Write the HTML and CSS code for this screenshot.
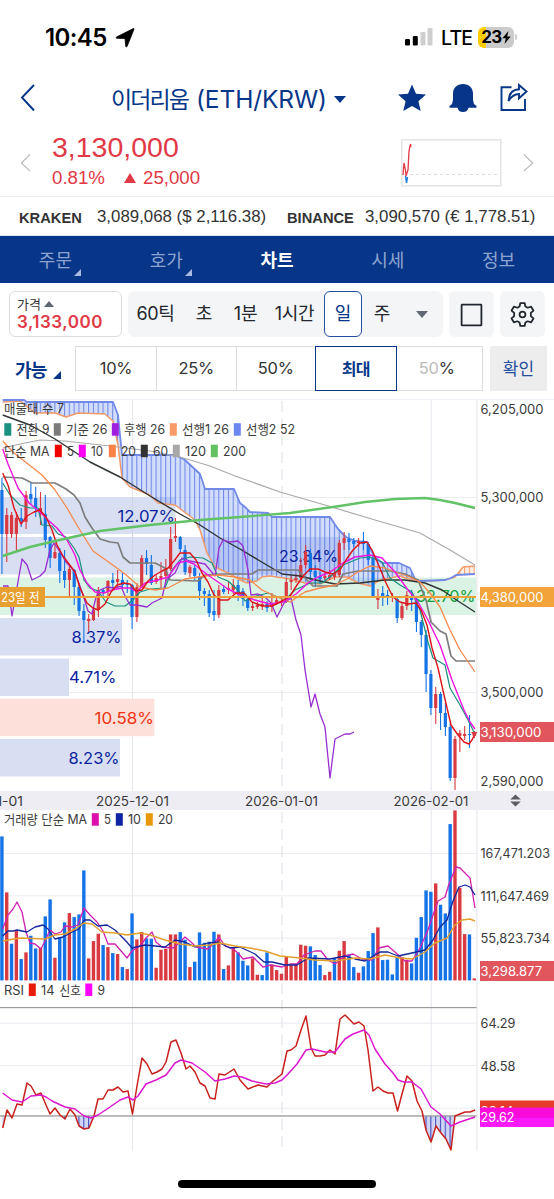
FILE: index.html
```html
<!DOCTYPE html>
<html lang="ko">
<head>
<meta charset="utf-8">
<title>이더리움 (ETH/KRW)</title>
<link rel="stylesheet" href="styles.css">
</head>
<body>
<div class="app">
  <div class="status">
    <span class="clock">10:45</span>
    <svg class="loc" viewBox="0 0 20 20"><path d="M19 1.2 L12 18.6 Q11.300 19.6 10.8 18.4 L10 10.4 L1.9 10.3 Q0.3 9.8 1.6 8.9 L18 .7 Q19.3 .3 19 1.2Z"/></svg>
    <svg class="signal" viewBox="0 0 29 18"><rect x="0" y="11" width="5" height="6.5" rx="1.3"/><rect x="7.8" y="8" width="5" height="9.500" rx="1.3"/><g fill="#cfcfcf"><rect x="15.500" y="4" width="5" height="13.5" rx="1.3"/><rect x="22.500" y="0" width="5" height="17.5" rx="1.3"/></g></svg>
    <span class="lte">LTE</span>
    <span class="battery"><span>23</span><svg viewBox="0 0 9 13"><path d="M6.500 0 L.3 7.200 H3.800 L2.500 13 L8.700 5.400 H5.200Z"/></svg></span>
    <span class="battery-cap"></span>
  </div>

  <div class="header">
    <svg class="back" viewBox="0 0 16 28"><path d="M14 1 L2 13.500 L14 26.500"/></svg>
    <div class="title"><span class="name">이더리움</span><span>(ETH/KRW)</span><i></i></div>
    <svg class="star" viewBox="0 0 30 30"><path d="M15 1.500 L19 10.700 L29 11.600 L21.400 18.200 L23.700 28 L15 23 L6.300 28 L8.600 18.200 L1 11.600 L11 10.700Z"/></svg>
    <svg class="bell" viewBox="0 0 30 30"><path d="M15 1 C9 1 5 5 5 10.500 V17 L4 21 L1.500 23 V24.700 H9.500 C10 27.500 12 29 15 29 C18 29 20 27.500 20.500 24.700 H28.500 V23 L26 21 L25 17 V10.500 C25 5 21 1 15 1Z"/></svg>
    <svg class="share" viewBox="0 0 30 30"><path d="M12.500 4.300 H2.500 V27 H26 V16"/><path d="M9.500 18 C10 10 13.500 6.500 20 6.300 V2 L27.500 8.500 L20 15.300 V11 C15.500 11 12.500 13 9.500 18Z"/></svg>
  </div>

  <div class="quote">
    <svg class="arrow" viewBox="0 0 12 22"><path d="M11 1.500 L1.500 11 L11 20"/></svg>
    <div class="figures">
      <div class="price">3,130,000</div>
      <div class="change"><span>0.81%</span><i></i><span>25,000</span></div>
    </div>
    <svg class="spark" viewBox="0 0 101 48"><rect x=".8" y=".8" width="99" height="46"/><path class="dash" d="M9 35.500 H97"/><path class="up" d="M2 36 L3 24 L4.500 31 L5 37 L7 31 L8 12 L9.500 5 L10 8"/><path class="down" d="M4.500 37 L5.500 44 L6.500 38"/></svg>
    <svg class="arrow" viewBox="0 0 12 22"><path d="M1 1.500 L10.500 11 L1 20"/></svg>
  </div>

  <div class="rates">
    <b>KRAKEN</b><span>3,089,068 ($ 2,116.38)</span>
    <b>BINANCE</b><span>3,090,570 (€ 1,778.51)</span>
  </div>

  <div class="tabs">
    <div class="tab more">주문</div><div class="tab more">호가</div><div class="tab on">차트</div><div class="tab">시세</div><div class="tab">정보</div>
  </div>

  <div class="tools">
    <div class="pricebox"><div class="label">가격<i></i></div><b>3,133,000</b></div>
    <div class="periods"><span>60틱</span><span>초</span><span>1분</span><span>1시간</span><span class="sel">일</span><span>주</span><i></i></div>
    <div class="tool"><svg viewBox="0 0 24 24"><rect x="2.500" y="2.500" width="19" height="20" rx=".5"/></svg></div>
    <div class="tool"><svg viewBox="0 0 24 24"><path d="M9.900 1 H14.100 L14.800 4.300 L17 5.500 L20.300 4.500 L22.500 8.200 L20 10.500 V13.500 L22.500 15.800 L20.300 19.500 L17 18.500 L14.800 19.700 L14.100 23 H9.900 L9.200 19.700 L7 18.500 L3.700 19.500 L1.500 15.800 L4 13.500 V10.500 L1.500 8.200 L3.700 4.500 L7 5.500 L9.200 4.300Z"/><circle cx="12" cy="12" r="2.800"/></svg></div>
  </div>

  <div class="ratio">
    <div class="avail">가능<i></i></div>
    <div class="cells"><span>10%</span><span>25%</span><span>50%</span><span class="sel">최대</span><span><em>50</em>%</span></div>
    <div class="confirm">확인</div>
  </div>

  <svg id="price" class="panel" viewBox="0 399 554 392" height="392"></svg>
  <div class="dates">
    <svg viewBox="0 791 554 19" height="19" id="dates"></svg>
  </div>
  <svg id="volume" class="panel" viewBox="0 810 554 171" height="171"></svg>
  <svg id="rsi" class="panel" viewBox="0 981 554 171" height="171"></svg>
  <div class="home"></div>
</div>
<script src="chart.js"></script>
</body>
</html>
```
FILE: styles.css
```css
* { box-sizing: border-box; }
body { margin: 0; background: #fff; font-family: "Liberation Sans", "Noto Sans CJK KR", sans-serif; }
i, em { font-style: normal; }
svg { display: block; flex: none; }
.app { width: 554px; height: 1199px; display: flex; flex-direction: column; overflow: hidden; white-space: nowrap; }
.app > * { flex: none; }

.status { height: 74px; display: flex; align-items: center; padding-left: 45px; font-family: Inter, sans-serif; color: #000; }
.clock { width: 64px; margin-top: 2px; font-size: 24px; font-weight: 600; letter-spacing: -.6px; line-height: 24px; }
.loc { width: 20px; height: 20px; margin-left: 6px; margin-top: 1px; stroke: #000; stroke-width: .8; overflow: visible; }
.signal { width: 29px; height: 18px; margin-left: 270px; }
.lte { width: 37px; margin-left: 7px; margin-top: 2px; font-size: 19.500px; font-weight: 500; letter-spacing: -.8px; }
.battery { width: 36px; height: 21px; margin-top: 0; border-radius: 6px; background: linear-gradient(90deg, #fc0 8px, #cbcbcb 8px); display: flex; align-items: center; justify-content: center; font-size: 17px; font-weight: 700; letter-spacing: -.6px; }
.battery svg { width: 9px; height: 13px; }
.battery-cap { width: 2px; height: 6px; margin: 0 0 0 1px; border-radius: 0 2px 2px 0; background: #ccc; }

.header { height: 50px; display: flex; align-items: center; padding-left: 20px; color: #073688; }
.header svg { fill: #073688; }
.header .back, .header .share { fill: none; stroke: #073688; stroke-width: 1.900; }
.back { width: 16px; height: 28px; margin-top: -2px; }
.title { width: 286px; margin-left: 75px; display: flex; align-items: center; font: 400 24.500px/48px Inter, sans-serif; letter-spacing: -.1px; }
.title .name { width: 85px; margin-top: -3px; font: 400 23px/48px "Noto Sans CJK KR", sans-serif; letter-spacing: -1.900px; }
.title i { margin-left: 7px; border: 6px solid transparent; border-top: 7px solid #073688; border-bottom: 0; }
.star, .bell, .share { width: 30px; height: 30px; margin-top: -2px; }
.bell { margin-left: 21px; }
.share { margin-left: 21px; }

.quote { height: 73px; display: flex; padding-left: 20px; color: #e13945; border-bottom: 1px solid #ececec; }
.arrow { width: 11px; height: 20px; margin-top: 29px; fill: none; stroke: #b9b9b9; stroke-width: 1.300; }
.figures { width: 349px; padding-left: 21px; }
.price { font-size: 28.500px; line-height: 32px; margin-top: 7px; }
.change { display: flex; align-items: center; font-size: 18.700px; line-height: 24px; margin-top: 3px; }
.change i { margin: 0 7px 0 19px; border: 6.500px solid transparent; border-bottom: 10px solid #e13945; border-top: 0; }
.spark { width: 101px; height: 48px; margin: 15px 21px 0; fill: none; }
.spark rect { stroke: #e4e4e4; stroke-width: 1.500; }
.dash { stroke: #ddd; stroke-dasharray: 3 3; }
.up { stroke: #e13945; stroke-width: 1.300; }
.down { stroke: #2581da; stroke-width: 1.500; }

.rates { height: 39px; padding: 2px 0 0 19px; display: grid; grid-template-columns: 78px 190px 78px 180px; align-items: center; border-bottom: 1px solid #dce5f3; font-size: 16.850px; color: #333; }
.rates b { font-size: 14.700px; padding-top: 1px; }

.tabs { height: 47px; background: #073688; display: grid; grid-template-columns: repeat(5, 1fr); }
.tab { position: relative; text-align: center; color: #8da4d1; font: 400 18px/46px "Noto Sans CJK KR", sans-serif; }
.tab.on { color: #fff; font-weight: 700; }
.more::after { content: ""; position: absolute; left: 74px; top: 33px; border-left: 7px solid transparent; border-bottom: 7px solid #a9bbe0; }

.tools { height: 62px; padding: 8px 9px; display: flex; gap: 6px; }
.pricebox { width: 113px; height: 46px; border: 1.500px solid #dcdddf; border-radius: 6px; padding-left: 7px; color: #e13945; }
.pricebox .label { display: flex; align-items: center; gap: 3px; height: 14px; margin-top: 5px; font: 400 13px/14px "Noto Sans CJK KR", sans-serif; color: #333; }
.pricebox i { border: 5.500px solid transparent; border-bottom: 6px solid #5f6570; border-top: 0; }
.pricebox b { display: block; margin-top: 1px; font: 600 17px/20px Inter, sans-serif; letter-spacing: .5px; }
.periods { width: 315px; height: 46px; display: grid; grid-template-columns: 55px 42px 41px 57px 39px 40px 1fr; align-items: center; background: #f3f5f6; border-radius: 7px; text-align: center; font: 400 18px/46px Inter, "Noto Sans CJK KR", sans-serif; color: #24272e; letter-spacing: -.3px; }
.periods .sel { height: 46px; line-height: 43px; border: 1.500px solid #244f9f; border-radius: 6px; background: #fff; color: #073688; margin-left: 1px; }
.periods i { justify-self: center; margin-left: -1px; border: 6px solid transparent; border-top: 7px solid #606873; border-bottom: 0; }
.tool { width: 45px; height: 46px; display: grid; place-items: center; background: #f3f5f6; border-radius: 6px; }
.tool svg { width: 25px; height: 25px; fill: none; stroke: #22262e; stroke-width: 1.700; stroke-linejoin: round; }

.ratio { height: 54px; padding: 1px 0 0 15px; display: flex; }
.avail { width: 60px; height: 45px; display: flex; font: 700 18px/46px "Noto Sans CJK KR", sans-serif; letter-spacing: -.8px; color: #073688; }
.avail i { margin: 25px 0 0 6px; height: 8px; border-left: 8px solid transparent; border-bottom: 8px solid #073688; }
.cells { width: 408px; height: 45px; display: grid; grid-template-columns: 80px 79.500px 79.500px 81.500px 1fr; border: 1.500px solid #ddd; font: 400 16.500px/42px Inter, sans-serif; text-align: center; color: #333; letter-spacing: -.2px; }
.cells span + span { border-left: 1.500px solid #ddd; }
.cells span.sel { margin: -1px 0; border: 1.500px solid #073688; font: 700 16px/42px "Noto Sans CJK KR", sans-serif; letter-spacing: -.7px; color: #073688; }
.cells .sel + span { border-left: 0; }
.cells span:last-child { padding-right: 5px; }
.cells em { color: #bbb; }
.confirm { width: 57px; height: 45px; margin-left: 7px; background: #ededed; color: #244f9f; text-align: center; font: 400 17px/43px "Noto Sans CJK KR", sans-serif; }

.panel, .dates svg { width: 554px; }
.dates { height: 19px; background: #ededf3; }
.home { width: 198px; height: 8px; margin: 28px 0 0 178px; border-radius: 4px; background: #000; }
svg text { font-family: Inter, "Noto Sans CJK KR", sans-serif; font-size: 13px; fill: #3b3b3b; }
svg text.pct { font-size: 16.500px; }
```
FILE: chart.js
```js
const NS = 'http://www.w3.org/2000/svg';
const STEP = 4.82, X0 = 1.9;
const BLUE = '#1473e6', RED = '#d93a42';
const xOf = i => X0 + STEP * i;

function add(parent, tag, attrs, text) {
  const el = document.createElementNS(NS, tag);
  for (const k in attrs) el.setAttribute(k, attrs[k]);
  if (text !== undefined) el.textContent = text;
  parent.appendChild(el);
  return el;
}
const rect = (p, x, y, w, h, fill) => add(p, 'rect', { x, y, width: w, height: h, fill });
const line = (p, pts, stroke, w = 1.2) => add(p, 'polyline', { points: pts, fill: 'none', stroke, 'stroke-width': w, 'stroke-linejoin': 'round' });
// Label that spans x1..x2, centred vertically on cy
function label(p, s, x1, x2, cy, fill, cls) {
  const a = { x: x1, y: cy + (cls ? 5.7 : 4.7), textLength: x2 - x1, lengthAdjust: 'spacingAndGlyphs' };
  const t = add(p, 'text', a, s);
  if (fill) t.style.fill = fill;
  if (cls) t.setAttribute('class', cls);
}
function grid(p, top, bottom, rows) {
  rows.forEach(y => rect(p, 0, y, 476, 1, '#ececf2'));
  [132, 430.7].forEach(x => rect(p, x, top, 1, bottom - top, '#e6e6ee'));
  add(p, 'path', { d: `M282 ${top + 2}V${bottom}`, stroke: '#dedee6', 'stroke-dasharray': '11 6', fill: 'none' });
  rect(p, 476.3, top, 1.2, bottom - top, '#e8e8ee');
}
function legend(p, items, cy) {
  items.forEach(([color, s, x1, x2]) => {
    if (color) rect(p, x1 - 12.2, cy - 6.3, 7, 12.5, color);
    label(p, s, x1, x2, cy);
  });
}
function hatch(p, id, fill, stroke) {
  const pat = add(add(p, 'defs', {}), 'pattern', { id, x: X0 - .6, y: 0, width: STEP, height: 10, patternUnits: 'userSpaceOnUse' });
  rect(pat, 0, 0, STEP, 10, fill);
  rect(pat, 0, 0, 1.1, 10, stroke);
}
const reversed = s => s.split(' ').reverse().join(' ');

/* ---- price ---- */
const price = document.getElementById('price');
rect(price, 0, 398.500, 554, 1, '#e3e3f0');
grid(price, 399, 791, [497, 597, 692]);
[[497, 37, 175.5, '#d9dff2'], [537, 37.5, 340, '#d9dff2'], [577.5, 37.5, 476, '#dbf3e4'], [618, 37.5, 122, '#d9dff2'],
 [658.5, 37.5, 69, '#d9dff2'], [698.7, 37.5, 154.3, '#fee0da'], [739, 37.5, 120, '#d9dff2']]
  .forEach(([y, h, w, f]) => rect(price, 0, y, w, h, f));
rect(price, 132, 497, 1, 118, '#d0d5e6');
rect(price, 430.7, 577, 1, 38, '#cfe3da');

const spanB = '2.7,400 24,400 27,402 113,402 118,415 122,455 175,455 185,460 200,474 205,489 234,489 240,503 245,507 250,512 268,513 272,517 330,517 338,529 346,537 355,541 367,542 374,556 382,563 399,563 410,568 415,579 420,581 445,580';
const spanBEnd = '445,580 451,578 456,575 475,574';
const spanA = '2.7,402 20,401 35,413 55,413 66,417 78,413 105,414 113,421 118,445 122,478 130,487 150,495 158,503 175,505 195,520 200,530 207,553 215,567 228,573 240,580 247,583 257,581 262,577 270,576 290,579 305,583 320,584 335,577 347,577 358,583 370,586 380,580 400,576 405,578 412,580 430,581 445,580';
const spanAEnd = '445,580 455,577 463,567 475,566';
hatch(price, 'cloudBlue', 'rgba(110,145,245,.3)', 'rgba(80,110,225,.75)');
hatch(price, 'cloudOrange', 'rgba(255,170,120,.2)', '#f4a46f');
add(price, 'polygon', { points: spanB + ' ' + reversed(spanA), fill: 'url(#cloudBlue)' });
add(price, 'polygon', { points: spanAEnd + ' ' + reversed(spanBEnd), fill: 'url(#cloudOrange)' });
line(price, spanA + ' ' + spanAEnd, '#f29a6a', 1.5);
line(price, spanB + ' ' + spanBEnd, '#7189e8', 1.8);

label(price, '12.07%', 117.5, 175, 516, '#0b1fa0', 'pct');
label(price, '23.34%', 279, 338, 556.5, '#0b1fa0', 'pct');
label(price, '32.70%', 416, 475.5, 596.5, '#12a23c', 'pct');
label(price, '8.37%', 71.5, 121.5, 637.5, '#0b1fa0', 'pct');
label(price, '4.71%', 69, 116.5, 677.5, '#0b1fa0', 'pct');
label(price, '10.58%', 94.5, 154, 718, '#ee3312', 'pct');
label(price, '8.23%', 68.5, 119.5, 758.5, '#0b1fa0', 'pct');

// direction, high, body top, body bottom, low
const candles = `b478,490,534,574 r508,515,534,562 r512,515,534,538 r512,518,534,552 b508,518,521,527 r491,495,522,529 b482,494,499,505 b487,498,508,517 r492,508,513,525 b495,514,540,548
b536,537,558,568 r543,552,558,559 b548,553,571,583 b550,571,580,588 r566,569,580,596 b569,570,587,605 b583,587,611,616 b604,611,620,643 r614,619,621,632 r608,610,620,621
r587,590,610,617 b588,590,593,597 r580,581,591,598 b573,580,583,590 r570,579,582,588 b573,580,585,590 b580,583,585,593 b584,585,617,629 r583,587,617,622 r555,558,587,588
b550,558,564,575 b555,565,583,585 r575,578,582,584 r562,576,579,588 r559,569,576,583 r527,539,569,571 r518,536,538,542 b536,537,549,552 b545,550,572,575 r565,567,573,577
b565,568,576,580 b573,576,591,600 b588,591,594,606 b590,594,613,617 b590,611,615,621 r585,590,615,618 b585,589,592,594 r582,588,590,594 r579,585,590,594 b580,585,592,601
b588,591,599,606 b598,599,608,611 r603,606,608,611 r602,605,607,609 r598,604,606,610 b601,604,608,612 r593,603,607,612 r597,600,603,605 r598,601,603,606 r578,582,602,603
r576,580,582,590 r574,578,580,583 r558,565,578,580 r545,552,565,568 b549,553,572,580 b565,571,577,587 b572,576,579,584 r573,576,578,580 r570,575,578,580 r569,573,577,580
r540,543,575,577 r532,538,543,550 b533,539,542,550 b538,541,544,547 r538,541,543,547 b532,541,544,550 b542,544,560,565 b555,558,597,598 r589,597,600,609 b586,593,597,606
b590,595,597,605 r593,597,598,602 b598,599,618,623 r603,606,618,620 r591,595,606,610 b590,597,600,611 b598,599,622,632 b620,622,635,647 b630,635,674,692 b670,674,708,715
r687,694,708,724 b692,694,713,730 b703,713,727,736 b723,727,778,781 r736,739,778,790 r730,733,736,752 r726,734,736,740 b715,734,735,748 r731,732,736,738`.split(/\s+/);
candles.forEach((c, i) => {
  const color = c[0] === 'b' ? BLUE : RED;
  const [hi, t, b, lo] = c.slice(1).split(',').map(Number);
  const x = xOf(i);
  rect(price, x - .5, hi, 1.1, lo - hi, color);
  rect(price, x - 1.6, t, 3.2, b - t, color);
});

line(price, '2.7,448 25,443 40,440 65,441 110,446 150,451 180,457 210,466 235,476 280,492 325,505 375,520 420,533 450,550 475,565', '#aaa');
line(price, '2.7,415 30,425 55,439 90,462 120,477 150,496 180,514 200,525 220,538 240,549 260,561 282,574 300,576 320,581 335,584 360,583 385,580 405,580 425,583 442,590 458,601 475,612', '#2f3434', 1.4);
line(price, '2.7,477 22,478 32,483 55,483 66,489 74,495 80,503 85,517 92,528 100,539 110,542 118,543 123,557 130,563 155,563 165,568 170,580 198,581 205,575 220,574 252,574 258,570 298,570 305,578 313,586 337,586 343,574 358,571 390,571 405,574 418,580 426,600 431,622 440,631 446,634 451,656 456,661 475,661', '#7d7d7d', 1.7);
line(price, '2.7,483 10,495 20,505 30,508 38,508 42,525 52,526 58,534 66,537 74,548 79,557 84,580 90,588 98,591 106,602 115,606 125,606 133,600 140,592 150,589 165,588 172,570 180,560 190,557 203,558 212,563 218,577 228,581 238,590 245,601 252,597 268,593 285,600 295,590 310,583 322,583 330,577 343,565 360,558 370,557 382,562 390,578 400,585 412,592 420,610 428,642 433,658 445,665 450,688 460,705 468,720 475,734', '#18917f');
line(price, '3,586 8,586 12,616 22,559 27,565 32,580 40,576 45,571 50,550 54,543 60,552 66,562 75,572 82,592 88,611 92,614 96,597 100,590 107,587 114,588 121,586 125,596 130,605 137,605 147,607 152,603 162,598 166,580 175,573 182,558 190,561 205,564 215,576 219,548 223,540 230,542 238,541 243,546 248,570 251,595 258,594 265,597 271,603 277,617 284,603 291,598 296,620 301,635 305,670 311,707 315,694 320,714 325,727 330,778 335,739 341,736 345,734 350,734 354,732', '#982fd0', 1.3);
line(price, '2.7,441 14,453 28,464 42,475 55,490 67,508 78,527 93,551 110,563 125,574 140,587 155,590 168,588 185,579 205,576 218,575 235,577 250,580 262,590 275,596 290,602 305,592 320,588 335,585 347,579 358,572 370,566 385,568 398,573 410,577 420,582 430,593 440,607 450,630 460,650 475,672', '#f7894c', 1.3);
line(price, '2.7,449 8,464 18,488 29,503 40,512 48,520 57,528 67,540 75,555 80,570 87,583 95,592 104,593 112,590 122,588 130,588 137,592 145,583 158,580 168,577 178,563 186,561 194,564 200,569 208,575 218,582 228,589 240,595 255,600 270,604 283,602 296,594 308,583 318,577 330,572 343,563 355,557 370,555 382,558 395,572 408,590 418,602 428,620 440,645 452,680 464,710 470,722 475,729', '#f013df', 1.4);
line(price, '2.7,473 8,485 14,508 21,524 27,516 34,512 40,510 46,517 52,530 57,545 63,556 69,564 75,572 80,588 87,603 93,608 98,610 105,604 111,592 117,585 124,583 130,584 136,591 142,590 148,581 155,575 162,571 168,568 174,561 180,553 190,553 196,560 202,573 208,582 214,595 220,600 228,600 236,593 244,593 252,602 262,606 272,606 282,601 290,596 297,585 304,575 310,569 318,569 325,572 333,574 340,570 346,560 353,550 360,543 367,542 372,550 379,566 386,583 393,597 400,602 408,604 416,603 421,610 427,625 432,648 438,668 444,695 451,725 458,735 464,742 469,744 472,740 475,734', '#dd1218', 1.4);
line(price, '2.7,556 30,547 55,541 100,531 150,525 200,520 240,517 290,513 340,506 365,502 395,499 425,498 440,500 455,503 475,508', '#61c267', 2.4);
add(price, 'polygon', { points: '471,732 477.500,732 474.500,737', fill: RED });

rect(price, 45, 596, 431, 2, '#eca13a');
rect(price, 0, 587, 45, 20, '#e7a030');
label(price, '23일 전', 1, 39.5, 597, '#fff');
label(price, '매물대 수 7', 4, 64, 408);
legend(price, [['#18917f', '전환 9', 16.5, 49.5], ['#7a7a7a', '기준 26', 66, 107.5], ['#a020e0', '후행 26', 124, 165], ['#fa9a68', '선행1 26', 182, 229], ['#6d87f0', '선행2 52', 246, 295]], 429.5);
legend(price, [[null, '단순 MA', 4, 49.5], ['#f20000', '5', 67, 74], ['#fb00f5', '10', 91, 103], ['#fb8246', '20', 121, 136], ['#333', '60', 153, 168], ['#a8a8a8', '120', 185, 206], ['#62c262', '200', 223, 246]], 451);

label(price, '6,205,000', 480.5, 543.5, 409.5);
label(price, '5,300,000', 480.5, 543.5, 497.5);
label(price, '3,500,000', 480.5, 543.5, 692.5);
label(price, '2,590,000', 480.5, 543.5, 781);
rect(price, 480, 587, 74, 20, '#f2a33a');
label(price, '4,380,000', 480.5, 543.5, 597, '#fff');
rect(price, 480, 722, 74, 20, '#e0565c');
label(price, '3,130,000', 480.5, 541.5, 732.5, '#fff');

const dates = document.getElementById('dates');
label(dates, '2025-11-01', -50, 23, 801);
label(dates, '2025-12-01', 96, 169, 801);
label(dates, '2026-01-01', 245, 318, 801);
label(dates, '2026-02-01', 393.5, 468.5, 801);
add(dates, 'path', { d: 'M515.500 794.500 L520.800 799.500 H510.200Z M510.200 801.500 H520.800 L515.500 806.500Z', fill: '#5c5c64' });

/* ---- volume ---- */
const vol = document.getElementById('volume');
grid(vol, 810, 981, [853, 895.3, 937.7]);
// direction and bar height in thirds of a pixel
const bars = `b432 r264 b110 r148 b64 r84 b134 b96 r98 b192 b243 r68 b130 b174 r202 b190 b198 b330 r66 r118 r140 b106 r100 b82 r79 b40 r34 b201 r123 r145
b126 b125 r38 r92 r95 r138 r138 b145 b122 r40 b56 b144 b113 b116 b146 r138 b34 r45 r98 b84 b59 b45 r66 r17 b16 b84 r48 r31 r20 r72
r46 r48 r107 r104 b102 b76 b46 r16 r26 b66 r89 r118 b78 b40 r23 b42 b88 b142 r159 b61 b62 b18 b71 r70 r62 b51 b128 b190 b270 b266
r291 b227 b201 b469 r510 r278 r139 b138 r6`.split(/\s+/);
bars.forEach((s, i) => {
  const h = s.slice(1) / 3;
  rect(vol, xOf(i) - 1.7, 980.4 - h, 3.4, h, s[0] === 'b' ? BLUE : RED);
});
line(vol, '2.7,929 8,915 13,909 17,902 22,912 26,932 30,943 35,944 41,949 45,941 50,930 55,934 61,932 65,926 72,927 78,925 84,908 90,915 97,922 103,931 108,944 115,944 122,952 127,958 132,951 140,946 146,938 152,932 156,942 162,947 173,948 178,944 185,937 191,942 196,947 208,949 215,942 219,937 225,946 232,948 238,953 243,959 253,957 263,967 270,965 282,967 290,964 297,964 304,955 315,951 321,951 328,960 335,964 345,956 353,954 362,959 372,960 379,948 388,946 395,952 405,961 412,961 420,948 428,930 433,915 438,901 445,897 449,884 456,867 460,868 465,873 470,878 475,908', '#cf22b3', 1.3);
line(vol, '2.7,936 8,931 13,931 17,930 27,932 35,927 43,925 48,929 55,939 63,937 72,932 79,929 84,920 90,920 98,926 107,925 115,930 125,940 132,948 145,945 165,947 175,940 185,942 195,947 208,943 218,942 230,948 240,947 255,954 264,962 272,962 285,965 297,965 308,958 330,959 345,956 355,959 365,961 380,952 388,952 398,956 412,953 425,950 433,940 440,927 447,920 453,901 459,887 465,885 470,887 475,895', '#15269b', 1.3);
line(vol, '2.7,941 20,938 45,939 55,935 65,934 75,929 84,923 92,924 102,932 115,933 127,935 140,933 150,935 165,940 180,944 195,946 210,945 220,943 235,946 250,948 265,951 280,956 300,958 315,960 335,961 355,958 370,959 385,955 400,958 412,959 425,952 435,943 447,938 455,925 462,920 470,919 475,921', '#e2a02d', 1.4);
legend(vol, [[null, '거래량 단순 MA', 4, 87], ['#dc10aa', '5', 104, 111], ['#1023a5', '10', 128, 141], ['#e9980c', '20', 158, 173]], 819.5);
label(vol, '167,471.203', 480.5, 550, 853.5);
label(vol, '111,647.469', 480.5, 549, 896);
label(vol, '55,823.734', 480.5, 550, 938.5);
rect(vol, 480, 961, 74, 20, '#e0565c');
label(vol, '3,298.877', 480.5, 542, 971, '#fff');

/* ---- RSI ---- */
const rsi = document.getElementById('rsi');
grid(rsi, 981, 1151, [1022.7, 1065, 1107.7]);
const rsiLine = '2.7,1128 7,1110 12,1118 17,1104 22,1105 27,1083 31,1086 36,1095 41,1093 46,1105 50,1114 55,1108 60,1115 65,1119 70,1109 75,1115 79,1126 84,1129 89,1128 94,1116 98,1099 103,1099 108,1090 113,1090 118,1087 123,1092 128,1091 132.5,1114 137,1086 142,1058 147,1064 152,1074 157,1072 162,1069 166,1062 171,1042 176,1040 181,1053 186,1069 190,1066 195,1072 200,1083 205,1086 210,1098 215,1099 219,1074 225,1075 234,1069 240,1080 248,1089 258,1085 267,1087 273,1081 277,1078 282,1074 287,1051 291,1050 296,1046 301,1030 306,1016 311,1048 315,1056 320,1056 325,1055 330,1050 335,1054 340,1019 345,1015 349,1019 354,1024 359,1022 364,1026 368,1050 373,1091 378,1087 383,1091 388,1093 393,1093 397.5,1111 402,1094 407,1076 412,1081 417,1101 422,1111 426,1130 431,1142 436,1126 441,1133 446,1139 451,1150 455,1116 460,1114 465,1112 470,1112 475,1110';
hatch(rsi, 'oversold', 'rgba(120,135,225,.35)', '#4650bd');
rect(add(rsi.querySelector('defs'), 'clipPath', { id: 'below' }), 0, 1116, 476, 36);
add(rsi, 'polygon', { points: '2.7,1116 ' + rsiLine + ' 475,1116', fill: 'url(#oversold)', 'clip-path': 'url(#below)' });
rect(rsi, 0, 1007, 476.5, 1.2, '#999');
rect(rsi, 0, 1115.3, 476.5, 1.3, '#999');
line(rsi, rsiLine, '#c8201c', 1.5);
line(rsi, '2.7,1093 12,1100 22,1102 31,1096 41,1095 46,1097 52,1101 65,1107 75,1109 84,1116 91,1118 98,1115 110,1107 120,1100 128,1097 133,1100 138,1096 146,1084 156,1080 166,1075 175,1063 181,1060 192,1063 205,1072 215,1081 225,1079 234,1076 242,1077 252,1081 266,1084 275,1083 282,1080 288,1074 297,1064 306,1050 312,1049 325,1052 335,1052 345,1039 353,1034 364,1030 369,1035 375,1049 385,1064 393,1073 398,1080 404,1082 412,1082 421,1089 431,1107 440,1114 451,1126 460,1122 475,1117', '#dc17d0', 1.5);
legend(rsi, [[null, 'RSI', 4, 24], ['#e81b0c', '14', 41, 54.5], [null, '신호', 59.5, 81], ['#fb00fb', '9', 97.5, 105]], 989.8);
label(rsi, '64.29', 480.5, 515.5, 1023.5);
label(rsi, '48.58', 480.5, 515.5, 1065.8);
rect(rsi, 480, 1100.5, 74, 20, '#e63a2b');
label(rsi, '32.14', 480.5, 513.5, 1110.8, '#fff');
rect(rsi, 480, 1107.6, 74, 19.2, '#f90bdc');
rect(rsi, 480, 1118, 74, 8.8, '#fb1afb');
label(rsi, '29.62', 480.5, 514.5, 1117.5, '#fff');
```
